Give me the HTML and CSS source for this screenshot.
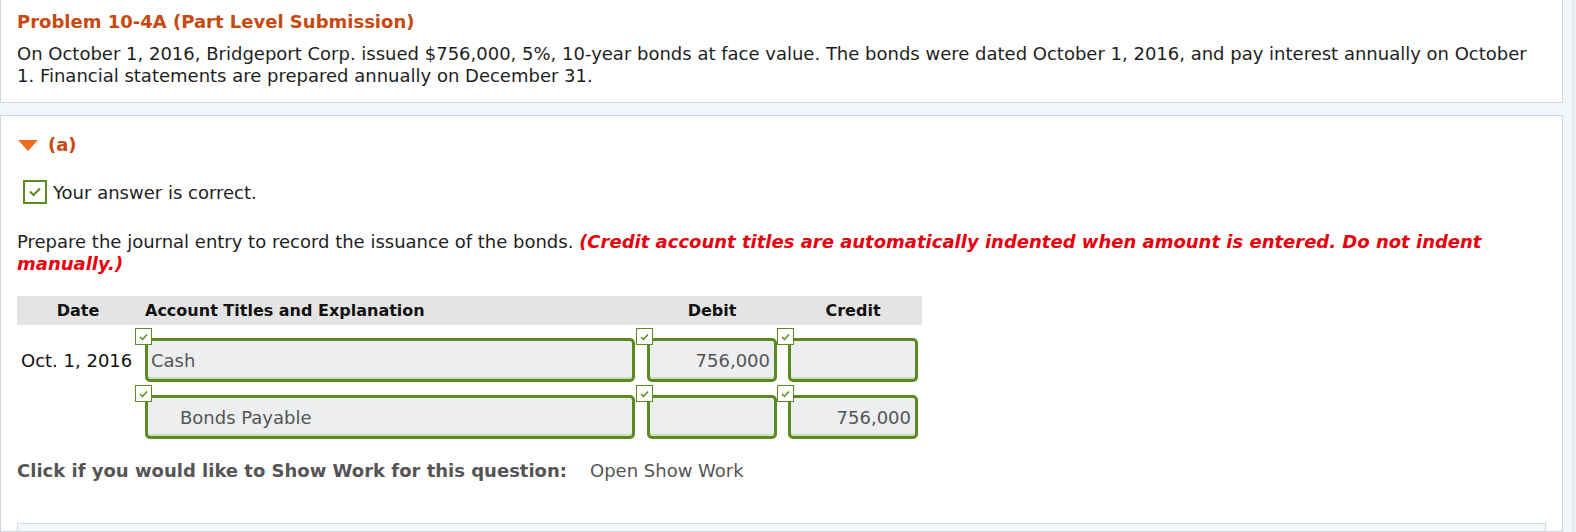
FILE: index.html
```html
<!DOCTYPE html>
<html>
<head>
<meta charset="utf-8">
<link rel="stylesheet" href="styles.css">
</head>
<body>
<div class="page">
  <div class="main">
    <section class="panel intro">
      <h1 class="title">Problem 10-4A (Part Level Submission)</h1>
      <p class="desc">On October 1, 2016, Bridgeport Corp. issued $756,000, 5%, 10-year bonds at face value. The bonds were dated October 1, 2016, and pay interest annually on October 1. Financial statements are prepared annually on December 31.</p>
    </section>
    <section class="panel part">
      <div class="part-head">
        <span class="tri"></span>
        <span class="part-label">(a)</span>
      </div>
      <div class="correct">
        <span class="bigcheck"><svg width="14" height="10" viewBox="0 0 14 10"><path d="M2 4.5 L5.5 8 L12 1.5" fill="none" stroke="#5b8a1e" stroke-width="2"/></svg></span>
        <span>Your answer is correct.</span>
      </div>
      <p class="prompt">Prepare the journal entry to record the issuance of the bonds. <em class="warn">(Credit account titles are automatically indented when amount is entered. Do not indent manually.)</em></p>
      <div class="journal">
        <div class="jhead">
          <div class="h-date">Date</div>
          <div class="h-acct">Account Titles and Explanation</div>
          <div class="h-debit">Debit</div>
          <div class="h-credit">Credit</div>
        </div>
        <div class="jrow">
          <div class="date-val">Oct. 1, 2016</div>
          <div class="field f-acct"><span class="mini"><svg width="11" height="8" viewBox="0 0 11 8"><path d="M2 4 L4.5 6.5 L9 1.5" fill="none" stroke="#5b8a1e" stroke-width="1.5"/></svg></span><div class="box">Cash</div></div>
          <div class="field f-debit"><span class="mini"><svg width="11" height="8" viewBox="0 0 11 8"><path d="M2 4 L4.5 6.5 L9 1.5" fill="none" stroke="#5b8a1e" stroke-width="1.5"/></svg></span><div class="box num">756,000</div></div>
          <div class="field f-credit"><span class="mini"><svg width="11" height="8" viewBox="0 0 11 8"><path d="M2 4 L4.5 6.5 L9 1.5" fill="none" stroke="#5b8a1e" stroke-width="1.5"/></svg></span><div class="box num"></div></div>
        </div>
        <div class="jrow">
          <div class="date-val"></div>
          <div class="field f-acct"><span class="mini"><svg width="11" height="8" viewBox="0 0 11 8"><path d="M2 4 L4.5 6.5 L9 1.5" fill="none" stroke="#5b8a1e" stroke-width="1.5"/></svg></span><div class="box indent">Bonds Payable</div></div>
          <div class="field f-debit"><span class="mini"><svg width="11" height="8" viewBox="0 0 11 8"><path d="M2 4 L4.5 6.5 L9 1.5" fill="none" stroke="#5b8a1e" stroke-width="1.5"/></svg></span><div class="box num"></div></div>
          <div class="field f-credit"><span class="mini"><svg width="11" height="8" viewBox="0 0 11 8"><path d="M2 4 L4.5 6.5 L9 1.5" fill="none" stroke="#5b8a1e" stroke-width="1.5"/></svg></span><div class="box num">756,000</div></div>
        </div>
      </div>
      <div class="showwork">
        <span class="sw-label">Click if you would like to Show Work for this question:</span>
        <span class="sw-link">Open Show Work</span>
      </div>
      <div class="nextbox"></div>
    </section>
  </div>
  <div class="scroll"></div>
</div>
</body>
</html>
```
FILE: styles.css
```css
html, body {
  margin: 0;
  padding: 0;
  background: #f3f6fa;
  height: 532px;
  overflow: hidden;
}
body {
  font-family: "DejaVu Sans", sans-serif;
  font-size: 18px;
  color: #1e1e1e;
}
.page {
  display: flex;
  height: 532px;
}
.main {
  width: 1563px;
  display: flex;
  flex-direction: column;
  gap: 12px;
}
.scroll {
  flex: 1;
  background: #eef0f2;
  border-left: 1px solid #dfe3e7;
  margin-left: 9px;
}
.panel {
  background: #fff;
  border: 1px solid #cdd5de;
}
.intro {
  flex: none;
  border-top: none;
  padding: 11px 16px 0 16px;
  height: 91px;
}
.title {
  margin: 0;
  font-size: 18px;
  font-weight: bold;
  color: #c8490f;
  line-height: 22px;
}
.desc {
  margin: 10px 0 0 0;
  line-height: 22px;
}
.part {
  flex: 1;
  min-height: 0;
  overflow: hidden;
  padding: 17px 16px 0 16px;
}
.part-head {
  display: flex;
  align-items: center;
  gap: 10px;
  height: 22px;
}
.tri {
  width: 0;
  height: 0;
  border-left: 10px solid transparent;
  border-right: 10px solid transparent;
  border-top: 11px solid #f26a1c;
  margin-left: 1px;
  margin-top: 2px;
}
.part-label {
  font-weight: bold;
  color: #c8490f;
  font-size: 18px;
}
.correct {
  display: flex;
  align-items: center;
  gap: 6px;
  margin-top: 25px;
  margin-left: 6px;
}
.bigcheck {
  width: 20px;
  height: 20px;
  border: 2px solid #5b8a1e;
  background: #fff;
  display: flex;
  align-items: center;
  justify-content: center;
}
.prompt {
  margin: 27px 0 0 0;
  line-height: 22px;
}
.warn {
  color: #e8000c;
  font-weight: bold;
}
.journal {
  margin-top: 21px;
  width: 905px;
}
.jhead {
  display: flex;
  background: #e4e4e4;
  height: 29px;
  align-items: center;
  font-weight: bold;
  font-size: 16px;
  color: #111;
}
.h-date { width: 122px; text-align: center; }
.h-acct { width: 502px; padding-left: 6px; }
.h-debit { width: 130px; text-align: center; }
.h-credit { width: 130px; text-align: center; margin-left: 11px; }
.jrow {
  display: flex;
  align-items: flex-start;
  height: 57px;
}
.date-val {
  width: 124px;
  padding-left: 4px;
  height: 44px;
  margin-top: 13px;
  display: flex;
  align-items: center;
  color: #111;
}
.field {
  position: relative;
  padding-top: 13px;
}
.f-debit { margin-left: 12px; }
.f-credit { margin-left: 11px; }
.mini {
  position: absolute;
  left: -11px;
  top: 3px;
  width: 17px;
  height: 17px;
  border: 1px solid #5b8a1e;
  background: #fff;
  display: flex;
  align-items: center;
  justify-content: center;
  box-sizing: border-box;
  z-index: 1;
}
.f-acct .mini { left: -10px; }
.box {
  border: 3px solid #5b8a1e;
  border-radius: 5px;
  background: #eceef0;
  height: 44px;
  box-sizing: border-box;
  box-shadow: inset 0 -2px 0 #cfdcbf;
  display: flex;
  align-items: center;
  color: #555;
  padding-left: 3px;
  padding-top: 1px;
}
.f-acct .box { width: 490px; }
.f-debit .box, .f-credit .box { width: 130px; justify-content: flex-end; padding-right: 4px; }
.box.indent { padding-left: 32px; }
.showwork {
  margin-top: 21px;
  display: flex;
  gap: 23px;
  color: #555;
  line-height: 22px;
}
.sw-label { font-weight: bold; }
.nextbox {
  margin-top: 41px;
  height: 30px;
  background: #f5f8fb;
  border: 1px solid #d3d9df;
}
```
